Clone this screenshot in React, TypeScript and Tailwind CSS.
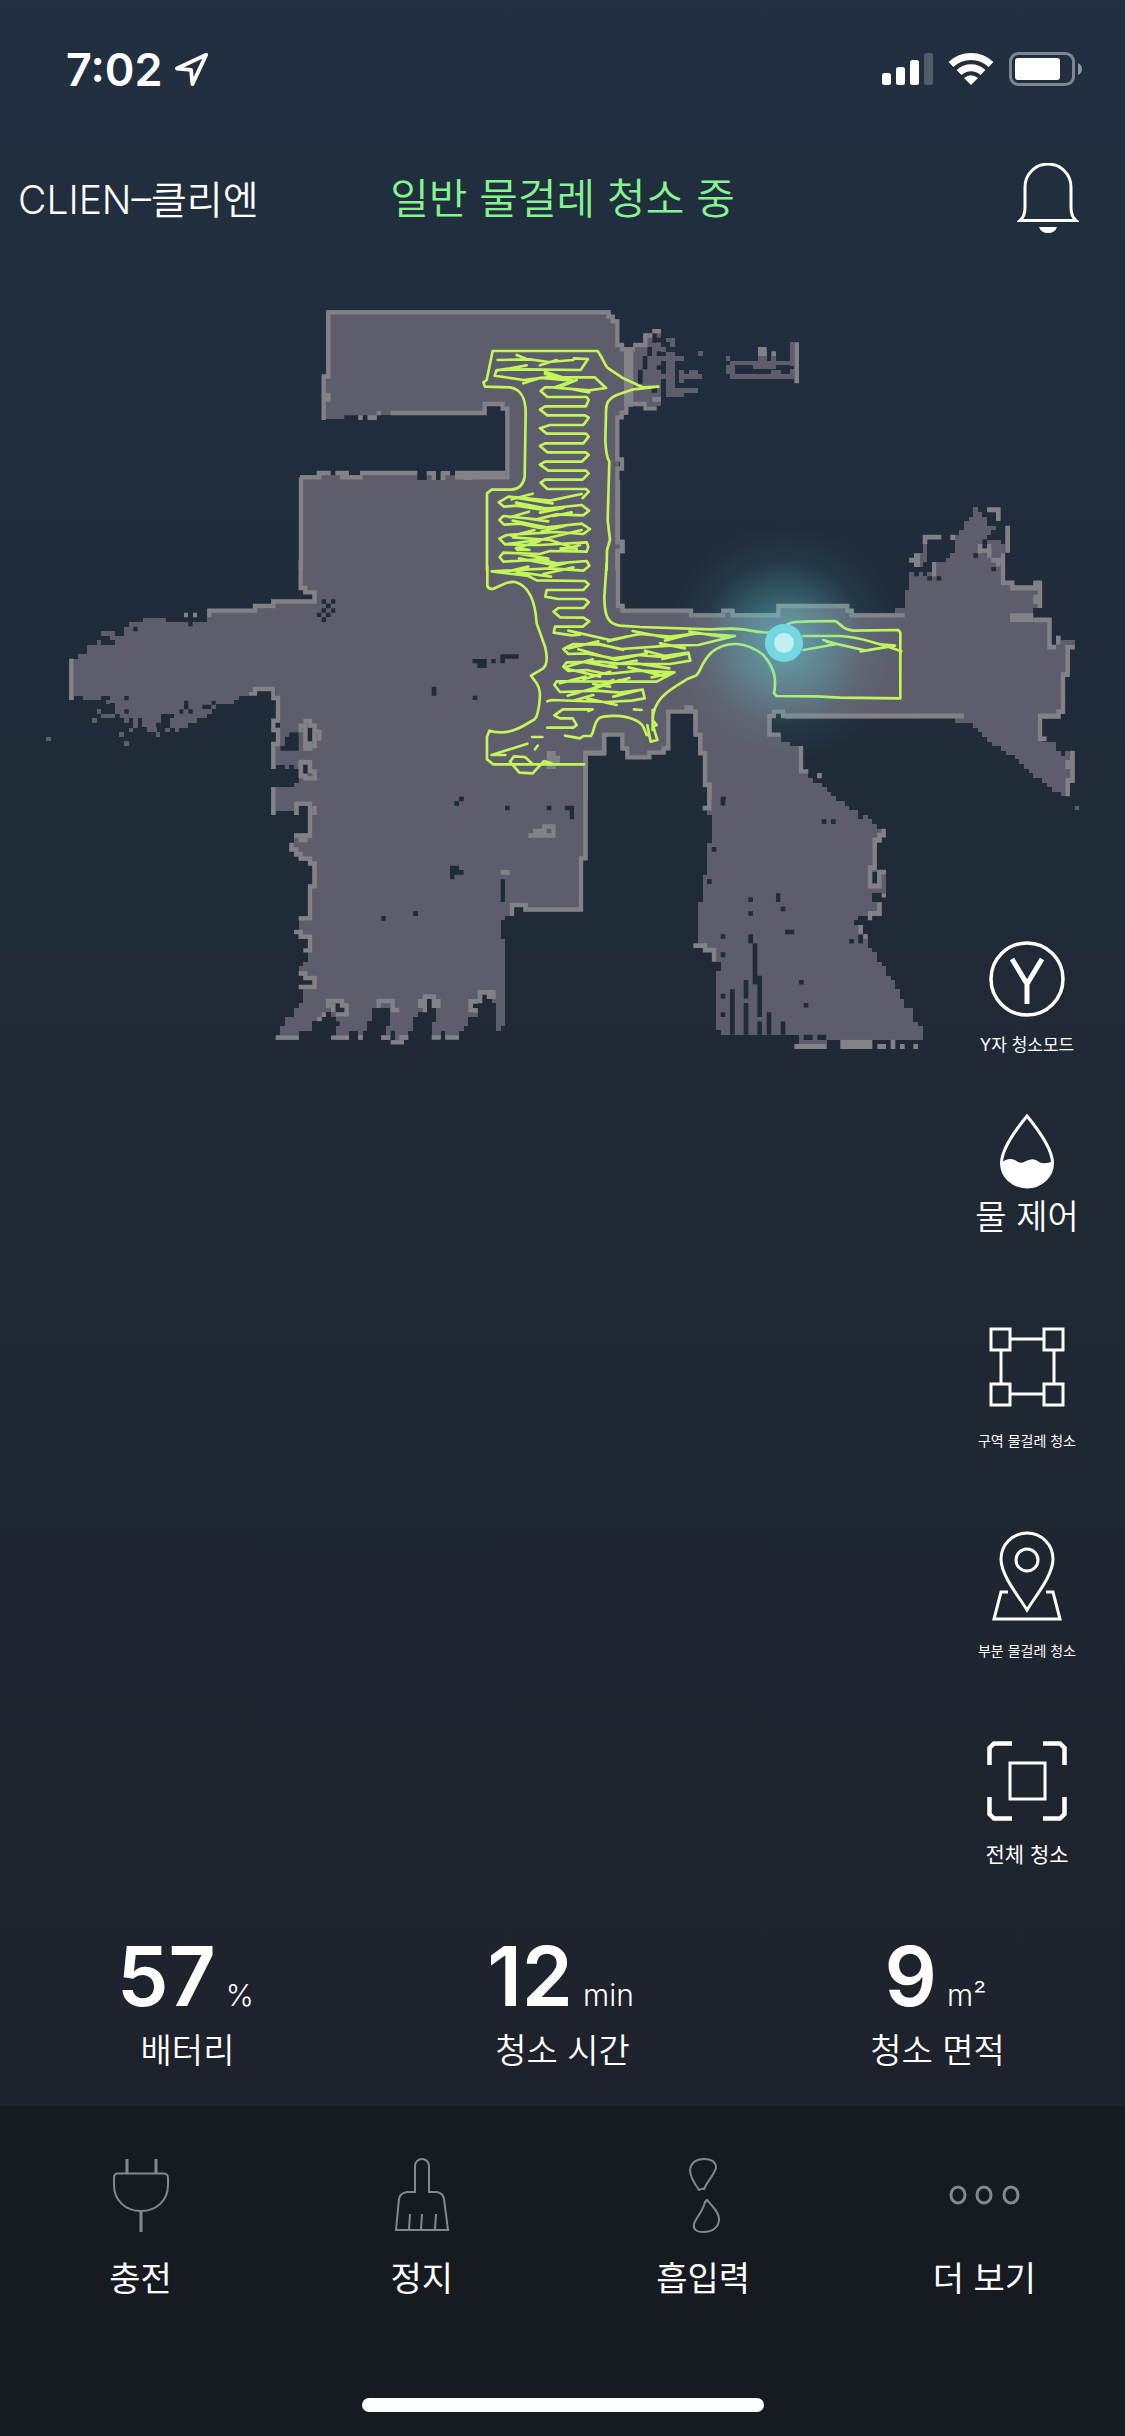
import type { ReactNode } from "react";

/** x, y, width, height of one block of grid cells. */
type Cell = [number, number, number, number];

interface MapSector {
  /** Places the sector on the map canvas. */
  transform: string;
  floor: string;
  floorCells: Cell[];
  holes: Cell[];
  walls: string;
  wallCells: Cell[];
}

const cellPath = (cells: Cell[]) =>
  cells.map(([x, y, w, h]) => `M${x} ${y}h${w}v${h}h${-w}z`).join("");

/* Each sector is stored at three units per canvas pixel. */
const NORTH: MapSector = {
  transform: "translate(300 290) scale(0.33333)",
  floor:
    "M78 60H932V75H945V88H958V158H972V172H1000V158H1030V130H1057V117H1083V348H985V375H958V840H0V555H628V350H615V343H548V375H230V388H65V253H78Z",
  floorCells: [
    [1097, 143, 27, 14], [1111, 157, 13, 14], [1083, 171, 14, 14], [1097, 185, 28, 14],
    [1083, 198, 70, 14], [1097, 212, 28, 100], [1083, 253, 20, 14], [1097, 307, 55, 14],
    [1125, 294, 68, 14], [1138, 239, 14, 41], [1138, 253, 69, 13], [1166, 239, 28, 14],
    [1194, 184, 14, 14], [1277, 198, 14, 14], [1290, 212, 180, 14], [1277, 226, 27, 26],
    [1290, 252, 138, 14], [1360, 226, 68, 12], [1414, 239, 30, 27], [1374, 198, 27, 14],
    [1414, 198, 14, 14], [1440, 252, 43, 14], [1470, 157, 13, 70], [1470, 238, 13, 20],
  ],
  holes: [
    [1014, 239, 14, 42], [1028, 198, 14, 40], [1057, 130, 13, 28], [1042, 171, 14, 27],
    [1070, 184, 13, 14], [1070, 226, 13, 13], [1055, 294, 16, 14], [352, 543, 28, 27],
    [133, 376, 28, 14], [161, 376, 14, 14], [188, 376, 14, 14], [92, 543, 14, 13],
    [408, 543, 14, 27], [450, 543, 14, 13], [1070, 143, 13, 14],
  ],
  walls:
    "M71 390V260H85V67H925V80H938V94H952V165H966V178H1005M1000 165H1036V137H1057M1030 355H1070M985 342H1040M979 343V368H965V382H952V508H966V536H952V756H966V783H952V840M272 369H554V342H608V356H622V562H465M465 549H615M180 549H352M50 549H92M106 549H147M0 562H64M120 562H188M3 562V840",
  wallCells: [
    [1057, 117, 26, 13], [972, 172, 28, 178], [1057, 321, 26, 14], [78, 308, 14, 27],
    [230, 362, 13, 14], [203, 376, 27, 14], [175, 376, 13, 14], [380, 543, 28, 13],
    [395, 556, 13, 14], [422, 543, 28, 13], [422, 556, 14, 14], [490, 556, 28, 14],
    [1374, 171, 26, 14], [1374, 184, 27, 14], [1414, 184, 14, 14], [1483, 157, 14, 123],
  ],
};

const WEST: MapSector = {
  transform: "translate(30 560) scale(0.33333)",
  floor:
    "M1260 0H806V90H820V103H847V118H723V132H668V146H531V186H407V173H338V186H297V200H283V228H255V255H172V283H145V296H117V420H131V408H158V420H213V408H241V430H255V462H268V475H283V490H296V475H310V503H323V475H337V500H350V515H380V500H392V462H420V503H475V488H502V475H530V462H545V447H558V433H613V420H627V408H655V394H668V380H737V408H750V545H723V627H737V614H765V627H778V614H792V627H806V668H792V682H723V765H737V752H792V765H806V738H833V820H792V848H778V875H792V890H806V903H833V917H847V972H833V1068H806V1110H792V1123H806V1137H833V1205H820V1219H806V1247H833V1260H847V1275H806V1288H820V1330H806V1343H792V1370H765V1398H751V1425H737V1440H806V1412H847V1384H875V1370H888V1357H903V1370H917V1440H957V1412H985V1440H998V1412H1012V1384H1026V1343H1080V1398H1067V1425H1054V1440H1082V1452H1122V1440H1135V1412H1150V1370H1165V1343H1178V1310H1260Z",
  floorCells: [
    [48, 530, 14, 14], [186, 475, 14, 14], [200, 448, 13, 13], [213, 462, 41, 13],
    [227, 420, 13, 13], [268, 517, 13, 13], [283, 544, 13, 13], [378, 517, 13, 13],
    [406, 503, 13, 13], [296, 503, 13, 13], [200, 241, 13, 14], [434, 503, 13, 13],
    [213, 214, 41, 13], [241, 227, 14, 14],
  ],
  holes: [
    [875, 118, 13, 13], [903, 118, 13, 13], [888, 131, 14, 14], [875, 145, 13, 13],
    [903, 145, 13, 13], [861, 158, 13, 13], [888, 158, 14, 13], [875, 172, 13, 14],
    [1205, 380, 14, 27], [1054, 1068, 13, 14], [1150, 1055, 13, 13], [778, 517, 28, 55],
    [765, 530, 13, 42], [751, 558, 14, 14], [310, 200, 13, 14], [283, 408, 13, 13],
    [283, 448, 13, 13], [462, 422, 13, 26], [448, 448, 12, 13], [475, 448, 13, 13],
    [517, 434, 27, 13], [545, 422, 12, 12], [420, 462, 12, 12], [406, 475, 14, 28],
    [378, 488, 14, 14], [475, 158, 13, 41], [255, 462, 14, 13], [268, 475, 14, 14],
    [917, 1330, 14, 27], [930, 1343, 14, 14], [917, 1384, 12, 14], [1082, 1412, 13, 28],
    [833, 503, 13, 40], [820, 615, 13, 26],
  ],
  walls:
    "M812 0V84H826V97H854V125H730V138H675V152H538V172M124 296V420M655 401H675V387H730V414H744V482H730V510H744V552H730V627M820 483H840V497H854V515H868V542M854 510V558H826V497H812V517M806 606H840V634H854V655H826V648H812V600M730 682V765M799 765V731H840V827H792M785 848V868H799V882H812V896H840V910H854V979H840V1075H806M792 1116H812V1130H840V1171H820M806 1240H826V1254H854V1281H806M737 1433H806M903 1433H957M1054 1433H1080M1082 1447H1122M888 1323H943M936 1323V1336H950V1363H917M1046 1343V1323H1088V1350H1108",
  wallCells: [
    [462, 158, 12, 14], [489, 158, 12, 14], [820, 545, 27, 27], [806, 833, 27, 14],
    [847, 738, 13, 27], [985, 1425, 13, 14], [861, 1370, 13, 14], [875, 1357, 13, 14],
    [888, 1330, 28, 13], [903, 1343, 13, 13], [1108, 1425, 27, 14],
  ],
};

const SOUTH: MapSector = {
  transform: "translate(410 720) scale(0.33333)",
  floor:
    "M0 0H600V40H575V95H533V420H520V575H340V562H313V588H285V601H272V657H285V918H272V932H258V850H245V837H230V823H217V850H190V864H203V890H175V918H162V932H147V958H106V932H92V958H65V905H78V864H65V837H50V877H24V890H10V932H0Z",
  floorCells: [],
  holes: [
    [147, 230, 14, 14], [133, 244, 14, 13], [285, 257, 14, 14], [410, 257, 14, 14],
    [465, 257, 27, 14], [479, 271, 13, 27], [120, 437, 27, 27], [147, 450, 14, 14],
    [120, 464, 13, 14], [272, 478, 13, 68], [10, 574, 14, 14],
  ],
  walls: "M582 40V101H526V415H513V568H347V555H306V588",
  wallCells: [
    [24, 837, 14, 27], [38, 823, 13, 54], [51, 823, 27, 14], [65, 837, 27, 27],
    [175, 837, 14, 40], [189, 837, 14, 14], [189, 864, 14, 14], [203, 810, 14, 40],
    [217, 810, 40, 14], [230, 823, 27, 14], [65, 946, 27, 13], [106, 946, 41, 13],
    [272, 450, 27, 14], [396, 313, 41, 13], [396, 326, 14, 27], [424, 326, 13, 27],
    [410, 340, 14, 13], [369, 326, 27, 27], [355, 340, 14, 13], [410, 93, 27, 54],
    [437, 107, 13, 27],
  ],
};

const CENTER: MapSector = {
  transform: "translate(440 480) scale(0.33333)",
  floor:
    "M0 0H540V372H554V387H760V400H843V387H884V400H1010V372H1228V387H1242V400H1367V387H1394V330H1408V275H1440V702H995V770H1022V785H1050V798H1077V880H1105V895H1118V908H1145V922H1160V935H1174V950H1188V960H809V910H795V815H781V757H767V690H685V805H671V812H628V832H562V812H547V764H493V818H430V960H0Z",
  floorCells: [],
  holes: [
    [98, 537, 42, 13], [112, 550, 28, 14], [154, 537, 13, 13], [181, 523, 55, 13],
    [181, 536, 14, 14], [98, 647, 14, 13], [57, 950, 14, 10], [843, 950, 14, 10],
    [1422, 275, 14, 13], [1008, 702, 14, 13],
  ],
  walls:
    "M534 0V186H548V213H534V378H547V392H753V406H850V392H877V406H1015V378H1222V392H1235V406H1394M1440 708H1029V695H1002M1002 689V708H988V764H1022M1083 798V874H1105M809 960V915H795V820H781V764H767V695H685V805H671V818H628V832H562V805H547V764H493V818H437V960",
  wallCells: [[1132, 880, 13, 14], [1408, 234, 14, 13], [1422, 220, 18, 41], [733, 676, 27, 14]],
};

const EAST: MapSector = {
  transform: "translate(680 480) scale(0.33333 0.3699)",
  floor:
    "M0 372H675V297H688V248H728V260H770V222H797V210H811V198H825V148H838V136H853V112H866V99H880V74H893V87H907V99H921V124H948V136H934V148H921V161H962V173H975V124H990V196H975V272H1002V285H1060V272H1087V346H1060V372H1115V445H1128V421H1142V433H1184V458H1170V532H1156V632H1142V645H1087V707H1128V732H1142V745H1156V732H1184V818H1170V855H1142V843H1115V830H1100V818H1087V806H1060V793H1046V780H1032V768H1018V755H1004V743H977V732H963V719H935V707H921V695H907V682H893V670H880V657H825V640H275V690H302V707H330V719H357V793H384V806H398V818H425V830H440V843H453V855H467V868H494V880H508V893H535V917H550V905H563V917H577V930H592V943H618V966H605V980H592V1054H618V1117H577V1140H605V1178H577V1190H563V1178H535V1190H522V1203H550V1228H563V1265H577V1277H592V1302H605V1315H618V1340H632V1352H646V1377H660V1402H673V1427H700V1464H714V1476H728V1513H440V1525H357V1500H122V1488H109V1327H122V1302H95V1277H68V1265H54V1142H68V1067H81V980H95V905H81V818H68V743H54V690H40V610H0Z",
  floorCells: [
    [728, 161, 14, 60], [716, 198, 14, 37], [1184, 880, 13, 13], [742, 248, 14, 12],
    [646, 347, 29, 14],
  ],
  holes: [
    [742, 260, 14, 12], [770, 260, 14, 12], [702, 248, 14, 12], [811, 185, 14, 12],
    [907, 161, 14, 24], [880, 198, 14, 12], [934, 235, 14, 12], [371, 1500, 27, 14],
    [412, 1500, 27, 14], [122, 856, 14, 24], [425, 917, 14, 13], [453, 917, 14, 13],
    [95, 992, 14, 13], [81, 1079, 14, 13], [205, 1129, 14, 12], [205, 1166, 14, 12],
    [288, 1117, 13, 24], [302, 1153, 14, 13], [315, 1216, 28, 12], [122, 1228, 14, 12],
    [122, 1277, 14, 13], [205, 1228, 14, 25], [218, 1253, 14, 110], [232, 1340, 14, 112],
    [191, 1352, 14, 50], [191, 1414, 14, 86], [150, 1377, 14, 123], [122, 1389, 14, 13],
    [122, 1439, 14, 13], [357, 1352, 14, 12], [371, 1414, 14, 12], [232, 1464, 14, 36],
    [260, 1439, 14, 61], [302, 1464, 14, 36], [508, 1241, 14, 12], [535, 1228, 14, 25],
    [577, 1060, 14, 30], [288, 632, 14, 13],
  ],
  walls:
    "M969 198V278H997V292H1067V278H1080V346M1060 378H1108V452H1128M1163 446V526H1149V626H1135V638H1080V700H1100M1177 732V812H1163V855M315 638H852M611 943V960H598V973H584V1048H570V1098H598V1060H618M598 1142V1172H570V1190M88 818V887H68M40 1259H75V1271H102V1302",
  wallCells: [
    [688, 210, 28, 13], [702, 222, 12, 13], [728, 148, 56, 13], [728, 161, 14, 12],
    [811, 148, 14, 14], [756, 222, 14, 26], [756, 248, 14, 12], [921, 74, 41, 13],
    [948, 87, 14, 24], [977, 124, 13, 72], [893, 173, 14, 26], [907, 185, 28, 12],
    [921, 173, 13, 37], [934, 210, 41, 13], [948, 222, 14, 12], [1060, 310, 20, 25],
    [990, 360, 70, 24], [1128, 421, 13, 24], [1156, 446, 28, 12], [1156, 757, 14, 24],
    [412, 793, 13, 13], [605, 1117, 13, 12], [535, 1203, 14, 25], [550, 1228, 12, 12],
    [343, 1525, 97, 13], [481, 1513, 96, 25], [592, 1525, 26, 13], [632, 1513, 14, 25],
    [660, 1525, 14, 13], [700, 1525, 14, 13],
  ],
};

const SECTORS = [WEST, SOUTH, CENTER, EAST, NORTH];

const NORTH_TRAIL =
  "M561 840V610L575 599H635C655 597 670 585 674 560L677 370C677 325 665 298 630 292L555 290L550 277L560 270L578 183H893C915 215 915 230 925 235L970 265L1028 292L1075 290L1000 298L950 315C920 328 918 345 918 370L916 450Q918 500 928 515L923 690L930 750L921 780L920 840" +
  "M593 210L690 208L745 216L820 210L822 205L864 207L842 240L680 238L590 240L584 257L670 270L740 262L884 262L918 294L868 301L765 293M650 195L680 207L745 216M720 226L770 210M680 226L630 235L590 241M670 280L720 264L820 272M735 245L820 272L765 292M868 307L820 298M735 252L800 265M830 270L780 290" +
  "M770 292H735L722 303L742 321H860L866 330L858 349H735L720 359L742 376H855L866 383L850 405H750L720 415L740 431H858L866 440L850 460H735L720 468L742 487H858L866 495L845 515H735L720 524L745 542H858L866 550L848 569H735L722 578L742 597H858L866 605L848 624";

const CENTER_TRAIL =
  "M142 260V318Q145 327 158 327C190 315 200 303 225 306C260 315 285 350 290 430L315 500C325 540 320 560 305 568L273 587L290 610C303 630 300 650 298 670C292 715 285 720 275 723C240 745 200 768 148 752L141 770V838L160 853H432" +
  "M500 250L493 350C493 410 505 432 540 437L600 441L810 448L870 446C920 445 940 458 990 458L1050 430Q1060 424 1110 424L1185 423C1205 430 1200 447 1240 452L1375 450L1381 458V655L1200 653L1130 649L1010 648L1002 640C1010 600 1005 565 970 525C920 485 860 480 815 517C780 550 780 585 765 588L740 598C700 625 640 650 638 720L650 735L640 740L652 780L632 785L622 735M638 690V750M628 765H620C610 740 610 730 580 718C550 705 500 705 480 713C460 725 467 745 453 768H430L420 775L375 767" +
  "M425 42L330 62L205 50L176 67L192 80L230 77L300 88L425 75L447 92L430 106L350 103L290 118L190 108L178 120L192 134L240 131L300 144L425 131L450 147L430 162L350 156L200 165L178 176L195 193L300 195L440 187L445 200L440 215L330 213L300 222L190 218L179 231L190 245L300 238L350 250L440 243L448 257L430 272L330 265L155 274L265 288L290 301L435 303L446 313L430 330H320L316 350L355 357H435L446 367L430 384H355L341 395L360 412L430 413L448 424L428 440H345L341 458L395 466L420 464" +
  "M278 41L215 58M338 70L230 54M228 68L330 88M300 98L370 84M267 95L210 112M325 124L250 114M218 122L330 144M305 154L380 136M395 97L340 108M283 150L215 168M425 150L300 180L195 193M220 172L330 180L410 207M228 205L300 183M362 210L420 195M362 205H410M232 210H268L230 203M325 236L240 222M237 235L340 255M328 262L380 248M400 262L310 282M265 260L200 275M333 290L230 276" +
  "M385 452L510 480L600 462L690 470L770 460L885 468L775 495L690 497L545 507L480 494L400 492L370 507L385 522L440 520L520 535L590 525L660 530L745 518L751 542L690 552L550 552L480 545L380 547L370 560L385 573L440 570L500 582L600 572L703 577L650 605L510 605L430 604L350 604L343 615L360 636L470 632L540 638L608 629L614 655L575 662L500 666L335 660L322 664" +
  "M578 453L690 475L770 460M505 484L560 470M675 482L760 460M748 455L860 472M475 484L385 505M550 510L470 490M415 508L520 538M615 512L690 532M525 540L620 520M735 505L660 490M667 537L745 520M458 538L380 560M530 563L440 548M383 567L480 590M590 542L500 558M565 562L680 590M430 598L510 575M688 565L590 550M635 592L700 577M437 590L360 610M568 594L470 620M383 647L460 625L520 600M460 612L510 620M465 625L540 600M520 650L600 630M460 645L400 662M530 675L440 655" +
  "M445 693L458 688H368L343 706L360 715H398L410 735L400 743H322M582 688L605 690M276 771H307M285 808L293 797M262 791L155 825H196M210 845L222 829L255 831L278 852M210 845L238 878L278 880L312 843L335 850" +
  "M1090 468H1200C1270 472 1300 490 1330 495L1384 514M1150 480L1190 492L1090 510M1160 485L1270 510M1262 514L1365 497L1320 493";

function FloorMap() {
  return (
    <svg
      viewBox="0 260 1125 800"
      className="col-start-1 row-start-1 w-full self-start"
      role="img"
      aria-label="청소 지도"
    >
      <defs>
        <radialGradient id="robot-glow">
          <stop offset="0" stopColor="#66d5de" stopOpacity="0.58" />
          <stop offset="0.35" stopColor="#66d5de" stopOpacity="0.32" />
          <stop offset="0.7" stopColor="#66d5de" stopOpacity="0.07" />
          <stop offset="1" stopColor="#66d5de" stopOpacity="0" />
        </radialGradient>
      </defs>
      {SECTORS.map((sector) => (
        <g key={sector.transform} transform={sector.transform} shapeRendering="crispEdges">
          <path d={sector.floor + cellPath(sector.floorCells)} fill="#5e5d6b" />
        </g>
      ))}
      {SECTORS.map((sector) => (
        <g key={sector.transform} transform={sector.transform}>
          <path d={cellPath(sector.holes)} fill="#1f2b38" />
          <path d={sector.walls} fill="none" stroke="#818186" strokeWidth="13" />
          <path d={cellPath(sector.wallCells)} fill="#818186" />
        </g>
      ))}
      <g fill="none" stroke="#c3f65a" strokeWidth="8" strokeLinecap="round" strokeLinejoin="round">
        <path transform={NORTH.transform} d={NORTH_TRAIL} />
        <path transform={CENTER.transform} d={CENTER_TRAIL} />
      </g>
      <circle cx="784" cy="643" r="118" fill="url(#robot-glow)" />
      <circle cx="784" cy="643" r="19" fill="#74d8e2" />
      <circle cx="784" cy="643" r="10" fill="#c2eef1" />
    </svg>
  );
}

function StatusBar() {
  return (
    <div className="flex h-[138px] items-center justify-between pr-[43px] pl-[66px]">
      <div className="flex items-center gap-3">
        <time className="font-['Inter',sans-serif] text-[45px] leading-none font-semibold">7:02</time>
        <svg width="36" height="38" viewBox="0 0 38 38" fill="none" stroke="white" strokeWidth="4" strokeLinejoin="round">
          <path d="M34 4L3 18.500L18 20L19.500 35Z" />
        </svg>
      </div>
      <div className="flex items-center gap-[15px]">
        <svg width="51" height="32" viewBox="0 0 51 32" fill="white">
          <rect y="20" width="9" height="12" rx="2.500" />
          <rect x="14" y="14" width="9" height="18" rx="2.500" />
          <rect x="28" y="7" width="9" height="25" rx="2.500" />
          <rect x="42" width="9" height="32" rx="2.500" opacity="0.22" />
        </svg>
        <svg width="46" height="34" viewBox="0 0 46 34" fill="none" stroke="white" strokeWidth="7">
          <path d="M3 12.500A29 29 0 0 1 43 12.500" />
          <path d="M11 20.500A17.500 17.500 0 0 1 35 20.500" />
          <path d="M16 26Q23 20.500 30 26L23 33Z" fill="white" stroke="none" />
        </svg>
        <svg width="73" height="34" viewBox="0 0 73 34" fill="none">
          <rect x="1.500" y="1.500" width="63" height="31" rx="8" stroke="white" strokeOpacity="0.42" strokeWidth="3" />
          <rect x="6" y="6" width="45" height="22" rx="3" fill="white" />
          <path d="M69 11Q73 13 73 17T69 23Z" fill="white" fillOpacity="0.5" />
        </svg>
      </div>
    </div>
  );
}

function Header() {
  return (
    <header className="grid h-[122px] grid-cols-[1fr_auto_1fr] items-center">
      <span className="pl-[18px] text-[39px] leading-none font-[350]">CLIEN–클리엔</span>
      <h1 className="text-[42px] leading-none font-[350] text-[#86f58f]">일반 물걸레 청소 중</h1>
      <button type="button" aria-label="알림" className="mr-[46px] justify-self-end">
        <svg width="62" height="72" viewBox="0 0 62 72" fill="none">
          <path
            d="M3 57.500Q8 53 8 45V24A23 23 0 0 1 54 24V45Q54 53 59 57.500Z"
            stroke="white"
            strokeWidth="3"
          />
          <path d="M22 64H40Q38 70 31 70T22 64Z" fill="white" />
        </svg>
      </button>
    </header>
  );
}

interface ToolProps {
  label: string;
  labelClass: string;
  className?: string;
  children: ReactNode;
}

function Tool({ label, labelClass, className = "", children }: ToolProps) {
  return (
    <button type="button" className={`flex flex-col items-center ${className}`}>
      {children}
      <span className={`whitespace-nowrap ${labelClass}`}>{label}</span>
    </button>
  );
}

function ToolColumn() {
  return (
    <nav className="z-10 col-start-1 row-start-1 flex w-[196px] flex-col items-center justify-self-end pt-[681px]">
      <Tool label="Y자 청소모드" labelClass="text-[17px] leading-6" className="gap-4">
        <svg width="76" height="76" viewBox="0 0 76 76" fill="none" stroke="white">
          <circle cx="38" cy="38" r="36" strokeWidth="3.500" />
          <path d="M23 18L38 43L53 18M38 42V63" strokeWidth="5" />
        </svg>
      </Tool>
      <Tool label="물 제어" labelClass="text-[34px] leading-10 font-[350]" className="mt-14 gap-2">
        <svg width="56" height="76" viewBox="0 0 56 76" fill="none">
          <path
            d="M28 3C19 14 2.500 35 2.500 50A25.500 24 0 0 0 53.500 50C53.500 35 37 14 28 3Z"
            stroke="white"
            strokeWidth="3"
          />
          <path d="M2 50C8 45 14 45 19 49Q23 51 27 48Q35 44 40 49Q46 52 54 48C55 64 44 74 28 74S1 64 2 50Z" fill="white" />
        </svg>
      </Tool>
      <Tool label="구역 물걸레 청소" labelClass="text-[14px] leading-5" className="mt-[90px] gap-6">
        <svg width="76" height="80" viewBox="0 0 76 80" fill="none" stroke="white" strokeWidth="3">
          <path d="M2 2H21V23H2ZM55 2H74V23H55ZM2 57H21V78H2ZM55 57H74V78H55Z" />
          <path d="M21 12H55M21 67H55M12 23V57M65 23V57" />
        </svg>
      </Tool>
      <Tool label="부분 물걸레 청소" labelClass="text-[14px] leading-5" className="mt-20 gap-5">
        <svg width="74" height="90" viewBox="0 0 74 90" fill="none" stroke="white" strokeWidth="3">
          <path d="M37 79C30 67 11 45 11 28A26 26 0 0 1 63 28C63 45 44 67 37 79Z" />
          <circle cx="37" cy="29" r="11" />
          <path d="M18 61H11L4 88H70L63 61H56" />
        </svg>
      </Tool>
      <Tool label="전체 청소" labelClass="text-[21px] leading-7" className="mt-20 gap-5">
        <svg width="80" height="80" viewBox="0 0 80 80" fill="none" stroke="white">
          <path d="M25 2.500H7L2.500 7V24M56 2.500H73L77.500 7V24M2.500 56V73L7 77.500H25M77.500 56V73L73 77.500H56" strokeWidth="4.500" />
          <rect x="23" y="22" width="35" height="36" strokeWidth="3" />
        </svg>
      </Tool>
    </nav>
  );
}

const STATS = [
  { value: "57", unit: "%", label: "배터리" },
  { value: "12", unit: "min", label: "청소 시간" },
  { value: "9", unit: "m²", label: "청소 면적" },
];

function Stats() {
  return (
    <dl className="grid grid-cols-3 pt-[72px] pb-[35px]">
      {STATS.map(({ value, unit, label }) => (
        <div key={label} className="flex flex-col-reverse items-center">
          <dt className="text-[34px] leading-10 font-[350]">{label}</dt>
          <dd className="flex items-baseline gap-2.5 pr-1 leading-[72px]">
            <span className="text-[82px] font-semibold">{value}</span>
            <span className="text-[30px] font-[350]">{unit}</span>
          </dd>
        </div>
      ))}
    </dl>
  );
}

const ACTIONS = [
  {
    label: "충전",
    icon: (
      <>
        <path d="M27 1V15M56 1V15M41 53V74" strokeWidth="3" />
        <path d="M17 15.500H64Q68 16 68 20V27C68 42 57 53 41 53S14 42 14 27V20Q14 16 17 15.500Z" />
      </>
    ),
  },
  {
    label: "정지",
    icon: (
      <>
        <path d="M34 34V8A7 7 0 0 1 48 8V34H56Q62 35 63 41L67 72H15L18 41Q19 35 26 34Z" />
        <path d="M29 56L28 71M41 56L40 71M55 56L54 71" />
      </>
    ),
  },
  {
    label: "흡입력",
    icon: (
      <>
        <path d="M37 32C32 25 28 19 28 12C29 5 34 1 42 1C50 1 54 4 54 10C52 17 46 22 42 31Q40 30 37 32Z" />
        <path d="M45 42Q43 43 42 47C40 54 34 60 32 66C31 71 34 74 41 74C51 74 57 69 57 61C57 54 50 48 45 42Z" />
      </>
    ),
  },
  {
    label: "더 보기",
    icon: (
      <g strokeWidth="3">
        <ellipse cx="15" cy="37" rx="7" ry="8" />
        <ellipse cx="41" cy="37" rx="7" ry="8" />
        <ellipse cx="68" cy="37" rx="7" ry="8" />
      </g>
    ),
  },
];

function ActionBar() {
  return (
    <footer className="flex flex-col items-center bg-[#161a21] pt-[52px] pb-[25px]">
      <nav className="grid w-full grid-cols-4">
        {ACTIONS.map(({ label, icon }) => (
          <button key={label} type="button" className="flex flex-col items-center gap-5 text-[34px] leading-[50px]">
            <svg width="82" height="76" viewBox="0 0 82 76" fill="none" stroke="#85878a" strokeWidth="2">
              {icon}
            </svg>
            {label}
          </button>
        ))}
      </nav>
      <div className="mt-[94px] h-[14px] w-[402px] rounded-full bg-white" />
    </footer>
  );
}

export default function App() {
  return (
    <div className="flex min-h-screen flex-col bg-linear-to-b from-[#212f40] via-[#1f2934] via-50% to-[#1d1f28] font-['Inter','Noto_Sans_CJK_KR',sans-serif] text-white">
      <StatusBar />
      <Header />
      <main className="grid flex-1">
        <FloorMap />
        <ToolColumn />
      </main>
      <Stats />
      <ActionBar />
    </div>
  );
}
